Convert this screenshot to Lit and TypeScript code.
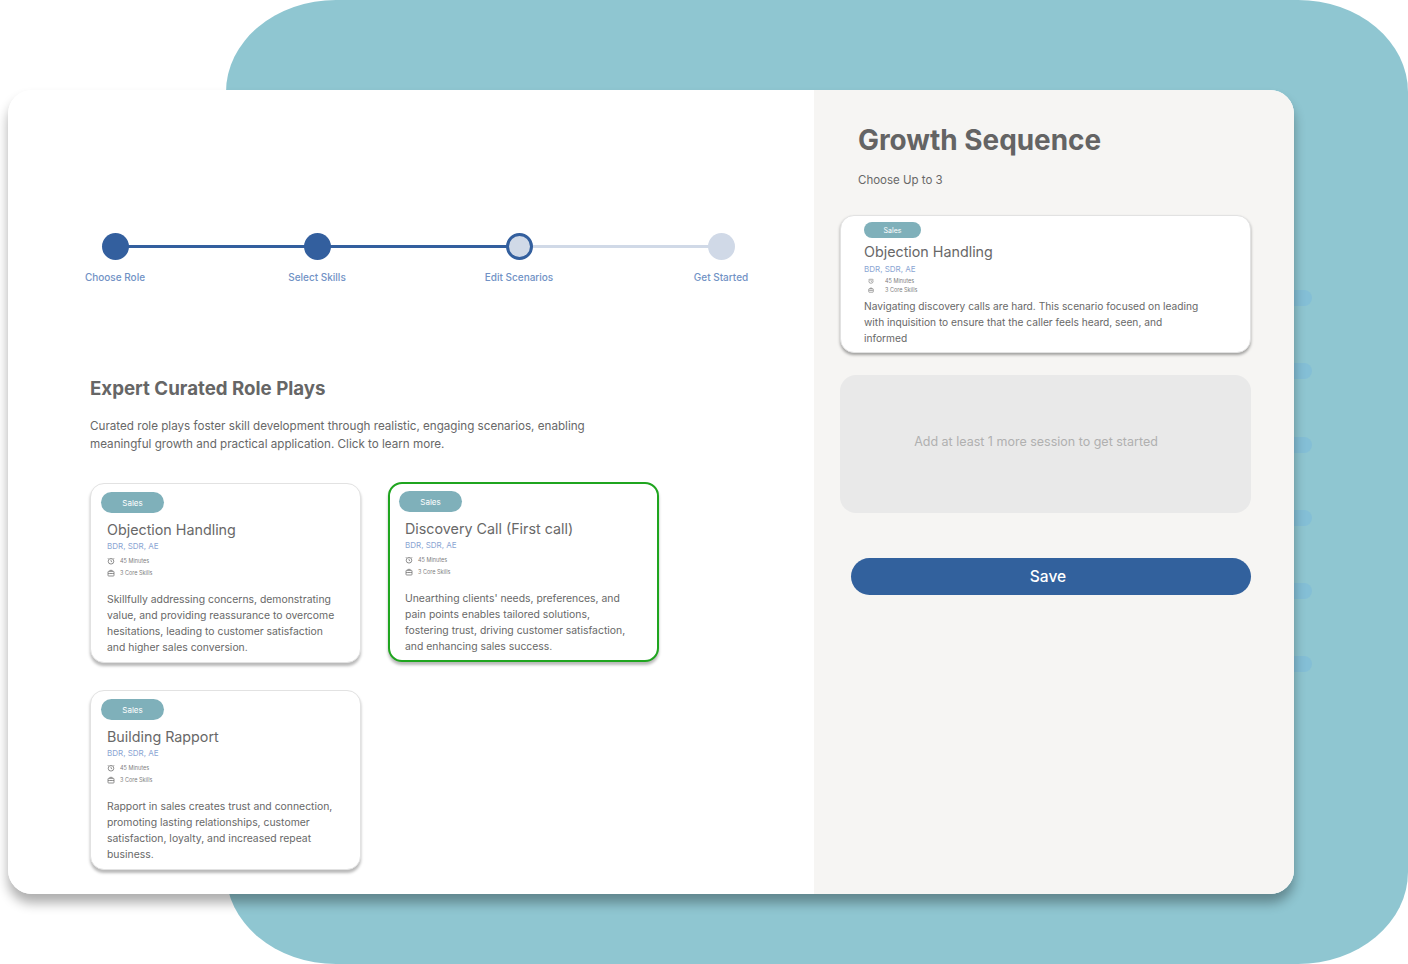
import { LitElement, html, css, svg } from "lit";
import { customElement } from "lit/decorators.js";

const clock = svg`<circle cx="6" cy="6.4" r="4.2" fill="none" stroke="currentColor" stroke-width="1.1"/><path d="M6 4v2.4l1.7 1" fill="none" stroke="currentColor" stroke-width="1"/><path d="M2.4 1.6 1.2 2.8M9.6 1.6l1.2 1.2" stroke="currentColor" stroke-width="1"/>`;
const case_ = svg`<rect x="1.5" y="3.5" width="9" height="7" rx="1" fill="none" stroke="currentColor" stroke-width="1.1"/><path d="M4.2 3.5V2h3.6v1.5M1.5 6.7h9M6 6v1.5" fill="none" stroke="currentColor" stroke-width="1"/>`;

const CARDS = [
  { title: "Objection Handling", lines: ["Skillfully addressing concerns, demonstrating", "value, and providing reassurance to overcome", "hesitations, leading to customer satisfaction", "and higher sales conversion."], sel: false },
  { title: "Discovery Call (First call)", lines: ["Unearthing clients' needs, preferences, and", "pain points enables tailored solutions,", "fostering trust, driving customer satisfaction,", "and enhancing sales success."], sel: true },
  { title: "Building Rapport", lines: ["Rapport in sales creates trust and connection,", "promoting lasting relationships, customer", "satisfaction, loyalty, and increased repeat", "business."], sel: false },
];
const STEPS = [
  { label: "Choose Role", cls: "done" },
  { label: "Select Skills", cls: "done" },
  { label: "Edit Scenarios", cls: "current" },
  { label: "Get Started", cls: "todo" },
];

@customElement("app-root")
export class AppRoot extends LitElement {
  static styles = css`
    :host { display: block; position: relative; width: 1408px; height: 964px; overflow: hidden; background: #fff;
      font-family: "Inter", "Open Sans", sans-serif; color: #686868; box-sizing: border-box; padding: 90px 114px 70px 8px; }
    * { box-sizing: border-box; }
    .bg { position: absolute; left: 226px; top: 0; width: 1182px; height: 964px; background: #8fc6d1; border-radius: 110px / 92px; }
    .blob { position: absolute; left: 1276px; width: 36px; height: 16px; border-radius: 8px; background: #84bfd6; }
    .main { position: relative; display: flex; height: 804px; background: #fff; border-radius: 24px; overflow: hidden; }
    .shadow { position: absolute; left: 8px; top: 90px; width: 1286px; height: 804px; border-radius: 24px; box-shadow: 0 9px 12px rgba(0,0,0,.32); }
    .left { width: 806px; flex: none; padding: 143px 0 0 57px; }
    .stepper { display: grid; grid-template-columns: repeat(4, 100px); column-gap: 102px; }
    .step { position: relative; display: flex; flex-direction: column; align-items: center; gap: 11px; }
    .step .dot { position: relative; z-index: 1; width: 27px; height: 27px; border-radius: 50%; background: #335f9e; }
    .step.current .dot { background: #d0d9e7; border: 3px solid #335f9e; }
    .step.todo .dot { background: #d0d9e7; }
    .step .line { position: absolute; left: 50%; top: 12px; width: 202px; height: 3px; background: #335f9e; }
    .step.current .line { background: #d0d9e7; }
    .step .lbl { font-size: 10px; font-weight: 500; line-height: 12px; color: #7192c5; white-space: nowrap; }
    h2 { margin: 94px 0 0 25px; font-size: 18.7px; line-height: 24px; font-weight: 700; color: #666; white-space: nowrap; }
    .intro { margin: 16px 0 0 25px; font-size: 11.65px; line-height: 18px; white-space: nowrap; }
    .grid { display: grid; grid-template-columns: 271px 271px; gap: 27px; margin: 30px 0 0 25px; align-items: start; }
    .card { position: relative; height: 180px; background: #fff; border: 1px solid #e2e2e2; border-radius: 14px; box-shadow: 0 3px 3px rgba(0,0,0,.28); padding: 8px 16px 0; }
    .card.sel { border: 2px solid #1fa51f; margin-top: -1px; padding: 7px 15px 0; }
    .pill { display: flex; align-items: center; justify-content: center; width: 63px; height: 21px; margin-left: -6px; border-radius: 11px; background: #7fb0ba; color: #fff; font-size: 8px; }
    .title { margin-top: 8px; font-size: 14.3px; line-height: 18px; white-space: nowrap; }
    .roles { margin-top: 1px; font-size: 8px; line-height: 12px; color: #8aa5d3; }
    .meta { display: flex; align-items: center; gap: 5px; font-size: 5.5px; height: 12px; color: #808080; }
    .meta svg { width: 8px; height: 8px; color: #666; }
    .metas { margin-top: 3px; }
    .desc { margin: 13px 0 0; font-size: 10.4px; line-height: 16px; white-space: nowrap; }
    .right { flex: 1; background: #f6f5f3; padding: 33px 43px 0 26px; }
    .right h1 { margin: 0 0 0 18px; font-size: 27.9px; line-height: 34px; font-weight: 700; color: #646464; white-space: nowrap; }
    .choose { margin: 15px 0 0 18px; font-size: 11.5px; line-height: 16px; }
    .seq { height: 138px; margin-top: 27px; background: #fff; border: 1px solid #e2e2e2; border-radius: 14px; box-shadow: 0 2px 3px rgba(0,0,0,.35); padding: 6px 23px 0; }
    .seq .pill { width: 57px; height: 16px; margin: 0; border-radius: 8px; font-size: 7px; }
    .seq .title { margin-top: 5px; }
    .seq .roles { margin-top: 2px; }
    .seq .metas { margin-top: 1px; }
    .seq .meta { height: 9px; gap: 11px; padding-left: 4px; }
    .seq .meta svg { width: 6px; height: 6px; }
    .seq .desc { margin-top: 4px; font-size: 10.2px; }
    .empty { display: flex; align-items: flex-start; justify-content: center; height: 138px; margin-top: 22px; padding: 59px 19px 0 0; background: #e9e9e9; border-radius: 16px; font-size: 12.5px; line-height: 16px; color: #b0b0b0; }
    .save { display: flex; align-items: center; justify-content: center; width: 400px; height: 37px; margin: 45px 0 0 11px; padding: 0 6px 0 0; border: 0; border-radius: 19px; background: #32619d; color: #fff; font: 500 15.5px "Inter", sans-serif; }
  `;

  private meta() {
    return html`<div class="metas">
      <div class="meta"><svg viewBox="0 0 12 12">${clock}</svg>45 Minutes</div>
      <div class="meta"><svg viewBox="0 0 12 12">${case_}</svg>3 Core Skills</div>
    </div>`;
  }

  render() {
    return html`
      <div class="bg"></div>
      ${[298, 371, 445, 518, 591, 664].map((y) => html`<div class="blob" style="top:${y - 8}px"></div>`)}
      <div class="shadow"></div>
      <div class="main">
        <section class="left">
          <div class="stepper">
            ${STEPS.map((s, i) => html`<div class="step ${s.cls}">
              ${i < 3 ? html`<div class="line"></div>` : ""}
              <div class="dot"></div><div class="lbl">${s.label}</div>
            </div>`)}
          </div>
          <h2>Expert Curated Role Plays</h2>
          <p class="intro">Curated role plays foster skill development through realistic, engaging scenarios, enabling<br>meaningful growth and practical application. Click to learn more.</p>
          <div class="grid">
            ${CARDS.map((c) => html`<article class="card ${c.sel ? "sel" : ""}">
              <div class="pill">Sales</div>
              <div class="title">${c.title}</div>
              <div class="roles">BDR, SDR, AE</div>
              ${this.meta()}
              <p class="desc">${c.lines.map((l) => html`${l}<br>`)}</p>
            </article>`)}
          </div>
        </section>
        <aside class="right">
          <h1>Growth Sequence</h1>
          <div class="choose">Choose Up to 3</div>
          <article class="seq">
            <div class="pill">Sales</div>
            <div class="title">Objection Handling</div>
            <div class="roles">BDR, SDR, AE</div>
            ${this.meta()}
            <p class="desc">Navigating discovery calls are hard. This scenario focused on leading<br>with inquisition to ensure that the caller feels heard, seen, and<br>informed</p>
          </article>
          <div class="empty">Add at least 1 more session to get started</div>
          <button class="save">Save</button>
        </aside>
      </div>
    `;
  }
}
